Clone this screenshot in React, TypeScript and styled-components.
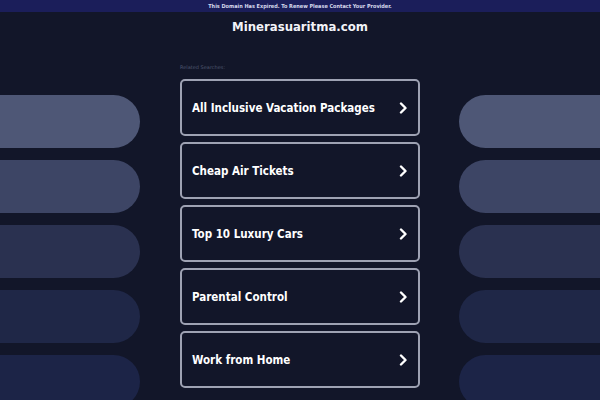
import styled, { createGlobalStyle } from 'styled-components';

const links = [
    'All Inclusive Vacation Packages',
    'Cheap Air Tickets',
    'Top 10 Luxury Cars',
    'Parental Control',
    'Work from Home',
];

const pillColors = ['#4e5776', '#3d4565', '#2a3150', '#1f2747', '#1c2447'];

const GlobalStyle = createGlobalStyle`
    html, body {
        margin: 0;
        padding: 0;
        background: #121629;
        font-family: "DejaVu Sans", sans-serif;
        overflow: hidden;
    }
`;

const Page = styled.div`
    width: 600px;
    height: 400px;
    overflow: hidden;
    background: #121629;
`;

const Notice = styled.div`
    height: 12px;
    background: #1b1e5a;
    color: #d6d9ec;
    font-family: "DejaVu Sans Condensed", "DejaVu Sans", sans-serif;
    font-size: 5.5px;
    font-weight: bold;
    display: flex;
    align-items: center;
    justify-content: center;
`;

const Title = styled.h1`
    margin: 0;
    padding-top: 7px;
    height: 30px;
    text-align: center;
    color: #f2f3f8;
    font-family: "DejaVu Sans Condensed", "DejaVu Sans", sans-serif;
    font-size: 13px;
    font-weight: bold;
    line-height: 16px;
`;

const Main = styled.div`
    display: grid;
    grid-template-columns: minmax(0, 1fr) 240px minmax(0, 1fr);
    column-gap: 40px;
    padding-top: 14px;
`;

const Side = styled.div`
    display: flex;
    flex-direction: column;
    gap: 12px;
    padding-top: 32px;
`;

const Pill = styled.div<{ $color: string; $right?: boolean }>`
    height: 53px;
    background: ${p => p.$color};
    border-radius: ${p => (p.$right ? '27px 0 0 27px' : '0 27px 27px 0')};
    margin-left: ${p => (p.$right ? '-1px' : '0')};
`;

const Center = styled.div`
    display: flex;
    flex-direction: column;
`;

const Label = styled.div`
    font-size: 5px;
    color: #4f5670;
    height: 16px;
    line-height: 8px;
`;

const List = styled.div`
    display: flex;
    flex-direction: column;
    gap: 6px;
`;

const Card = styled.a`
    height: 57px;
    box-sizing: border-box;
    border: 2px solid #9ea2b3;
    border-radius: 5px;
    display: flex;
    align-items: center;
    justify-content: space-between;
    padding: 0 10px;
    color: #ffffff;
    font-family: "DejaVu Sans Condensed", "DejaVu Sans", sans-serif;
    font-size: 11.5px;
    font-weight: bold;
    text-decoration: none;
    white-space: nowrap;
`;

const Chevron = () => (
    <svg width="10" height="12" viewBox="0 0 10 12">
        <polyline points="3,1.5 7.5,6 3,10.5" fill="none" stroke="#ffffff" strokeWidth="2.4" strokeLinecap="round" strokeLinejoin="round" />
    </svg>
);

export default function App() {
    return (
        <Page>
            <GlobalStyle />
            <Notice>This Domain Has Expired. To Renew Please Contact Your Provider.</Notice>
            <Title>Minerasuaritma.com</Title>
            <Main>
                <Side>
                    {pillColors.map(c => <Pill key={c} $color={c} />)}
                </Side>
                <Center>
                    <Label>Related Searches:</Label>
                    <List>
                        {links.map(l => (
                            <Card key={l} href="#">
                                <span>{l}</span>
                                <Chevron />
                            </Card>
                        ))}
                    </List>
                </Center>
                <Side>
                    {pillColors.map(c => <Pill key={c} $color={c} $right />)}
                </Side>
            </Main>
        </Page>
    );
}
